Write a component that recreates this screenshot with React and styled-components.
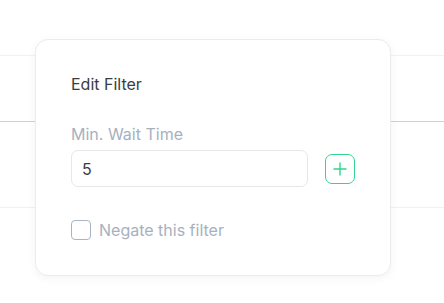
import styled, { createGlobalStyle } from "styled-components";

const Global = createGlobalStyle`
  html, body {
    margin: 0;
    padding: 0;
    background: #ffffff;
    font-family: Inter, "Noto Sans", sans-serif;
  }
`;

function PlusIcon() {
  return (
    <svg width="14" height="14" viewBox="0 0 14 14" fill="none">
      <path d="M7 1v12M1 7h12" stroke="currentColor" strokeWidth="1.4" strokeLinecap="round" />
    </svg>
  );
}

function App() {
  return (
    <>
      <Global />
      <Page>
        <Row $h={56} $line="#f1f1f3" />
        <Row $h={66} $line="#fbc49c" />
        <Row $h={86} $line="#f1f1f3" />
        <Row $h={95} />

        <Popover>
          <Title>Edit Filter</Title>
          <Label>Min. Wait Time</Label>
          <Field>
            <Input defaultValue="5" />
            <AddButton type="button">
              <PlusIcon />
            </AddButton>
          </Field>
          <Check>
            <Box />
            <span>Negate this filter</span>
          </Check>
        </Popover>
      </Page>
    </>
  );
}

const Page = styled.div`
  position: relative;
  width: 444px;
  height: 303px;
  overflow: hidden;
  display: flex;
  flex-direction: column;
`;

const Row = styled.div`
  height: ${(p) => p.$h}px;
  flex: none;
  box-sizing: border-box;
  border-bottom: ${(p) => (p.$line ? `1px solid ${p.$line}` : "none")};
`;

const Popover = styled.div`
  position: absolute;
  left: 35px;
  top: 39px;
  width: 356px;
  height: 237px;
  box-sizing: border-box;
  padding: 34px 35px 0 35px;
  background: #ffffff;
  border: 1px solid #ececef;
  border-radius: 13px;
  box-shadow: 0 2px 10px rgba(0, 0, 0, 0.05);
  display: flex;
  flex-direction: column;
`;

const Title = styled.div`
  font-size: 16px;
  line-height: 20px;
  color: #3a3d44;
`;

const Label = styled.div`
  margin-top: 30px;
  font-size: 16px;
  line-height: 20px;
  color: #a7b1be;
`;

const Field = styled.div`
  margin-top: 6px;
  display: flex;
  align-items: center;
  gap: 17px;
`;

const Input = styled.input`
  width: 237px;
  height: 37px;
  box-sizing: border-box;
  border: 1px solid #e6e7ea;
  border-radius: 7px;
  padding: 0 10px;
  font-family: inherit;
  font-size: 16px;
  color: #3a3d44;
  outline: none;
  background: #fff;
`;

const AddButton = styled.button`
  width: 30px;
  height: 30px;
  box-sizing: border-box;
  border: 1.5px solid #2fd68f;
  border-radius: 7px;
  background: #fff;
  color: #2fd68f;
  display: flex;
  align-items: center;
  justify-content: center;
  padding: 0;
  margin-top: 1px;
`;

const Check = styled.label`
  margin-top: 33px;
  display: flex;
  align-items: center;
  gap: 8px;
  font-size: 16px;
  line-height: 20px;
  color: #a7b1be;
`;

const Box = styled.span`
  width: 20px;
  height: 20px;
  box-sizing: border-box;
  border: 1.5px solid #a9b4c2;
  border-radius: 4px;
  flex: none;
`;

export default App;
